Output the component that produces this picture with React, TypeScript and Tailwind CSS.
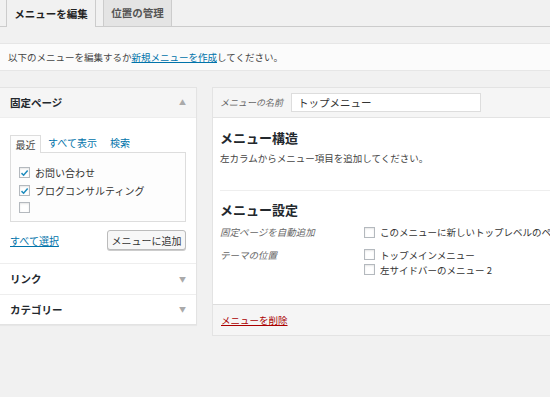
import React from "react"

const font = { fontFamily: '"Noto Sans CJK JP", "Noto Sans", sans-serif' }

function Check({ checked = false }: { checked?: boolean }) {
  return (
    <span className="inline-flex h-[11px] w-[11px] shrink-0 items-center justify-center border border-[#b4b9be] bg-white shadow-[inset_0_1px_2px_rgba(0,0,0,0.1)]">
      {checked && (
        <svg viewBox="0 0 12 12" className="h-[10px] w-[10px]">
          <path d="M2 6.2 L4.8 9 L10.2 2.6" fill="none" stroke="#1e8cbe" strokeWidth="2" />
        </svg>
      )}
    </span>
  )
}

function Arrow({ up = false }: { up?: boolean }) {
  return (
    <span className="text-[7px] leading-none text-[#aaa]">{up ? "▲" : "▼"}</span>
  )
}

export default function App() {
  return (
    <div className="h-[397px] w-[550px] overflow-hidden bg-[#f1f1f1] text-[#444]" style={font}>
      {/* tabs */}
      <div className="flex h-[27px] items-end gap-[7px] border-b border-[#ccc] pl-[6px]">
        <div className="-mb-px flex h-[27px] w-[90px] items-center justify-center border-x border-[#ccc] bg-[#f1f1f1] text-[10.5px] font-bold text-[#222]">
          メニューを編集
        </div>
        <div className="flex h-[26px] w-[69px] items-center justify-center border-x border-[#ccc] bg-[#e4e4e4] text-[10.5px] font-bold text-[#555]">
          位置の管理
        </div>
      </div>

      {/* notice */}
      <div className="mt-[16px] flex h-[28px] items-center border-y border-[#e6e6e6] bg-[#fbfbfb] pl-[8px] text-[9.5px] text-[#444]">
        以下のメニューを編集するか
        <a className="text-[#0073aa] underline">新規メニューを作成</a>
        してください。
      </div>

      <div className="mt-[16px] flex items-start gap-[15px]">
        {/* left column */}
        <div className="w-[197px] shrink-0 border border-l-0 border-[#e3e3e3] bg-white shadow-[0_1px_1px_rgba(0,0,0,0.04)]">
          <div className="flex h-[30px] items-center justify-between border-b border-[#eee] bg-[#f5f5f5] px-[10px]">
            <span className="text-[10.5px] font-bold text-[#23282d]">固定ページ</span>
            <Arrow up />
          </div>
          <div className="px-[10px] pb-[13px] pt-[17px]">
            <div className="flex items-end text-[10px]">
              <div className="-mb-px flex h-[18px] w-[31px] items-center justify-center border border-b-0 border-[#ddd] bg-[#fdfdfd] text-[#444]">
                最近
              </div>
              <span className="ml-[7px] pb-[2px] text-[#0073aa]">すべて表示</span>
              <span className="ml-[13px] pb-[2px] text-[#0073aa]">検索</span>
            </div>
            <div className="flex h-[70px] flex-col gap-[3px] border border-[#ddd] bg-[#fdfdfd] pl-[8px] pt-[12px] text-[10px] text-[#333]">
              <label className="flex items-center gap-[5px]">
                <Check checked />
                お問い合わせ
              </label>
              <label className="flex items-center gap-[5px]">
                <Check checked />
                ブログコンサルティング
              </label>
              <label className="flex items-center gap-[5px] pt-[1px]">
                <Check />
              </label>
            </div>
            <div className="mt-[8px] flex items-center justify-between">
              <a className="text-[10px] text-[#0073aa] underline">すべて選択</a>
              <button className="h-[20px] w-[79px] rounded-[3px] border border-[#bbb] bg-[#f7f7f7] text-[10px] text-[#333] shadow-[0_1px_0_#ccc]">
                メニューに追加
              </button>
            </div>
          </div>
          <div className="flex h-[31px] items-center justify-between border-t border-[#eee] px-[10px]">
            <span className="text-[10.5px] font-bold text-[#23282d]">リンク</span>
            <Arrow />
          </div>
          <div className="flex h-[30px] items-center justify-between border-t border-[#eee] px-[10px]">
            <span className="text-[10.5px] font-bold text-[#23282d]">カテゴリー</span>
            <Arrow />
          </div>
        </div>

        {/* right column */}
        <div className="w-[360px] shrink-0 border border-r-0 border-[#e3e3e3] bg-white">
          <div className="flex h-[30px] items-center gap-[8px] border-b border-[#e3e3e3] bg-[#f5f5f5] pl-[7px]">
            <span className="text-[9px] italic text-[#666]">メニューの名前</span>
            <div className="flex h-[19px] w-[190px] items-center border border-[#ddd] bg-white pl-[6px] text-[10.5px] text-[#333]">
              トップメニュー
            </div>
          </div>
          <div className="pl-[7px]">
            <div className="pt-[10px] text-[13px] font-bold text-[#23282d]">メニュー構造</div>
            <div className="mt-[3px] text-[9.5px] text-[#444]">左カラムからメニュー項目を追加してください。</div>
            <div className="mt-[25px] border-t border-[#eee]" />
            <div className="pt-[9px] text-[13px] font-bold text-[#23282d]">メニュー設定</div>
            <div className="mt-[6px] flex text-[9.5px]">
              <span className="w-[144px] shrink-0 italic text-[#666]">固定ページを自動追加</span>
              <label className="flex items-center gap-[5px] whitespace-nowrap text-[#333]">
                <Check />
                このメニューに新しいトップレベルのページを自動追加
              </label>
            </div>
            <div className="mt-[8px] flex pb-[27px] text-[9.5px]">
              <span className="w-[144px] shrink-0 italic text-[#666]">テーマの位置</span>
              <div className="flex flex-col gap-[1px] text-[#333]">
                <label className="flex items-center gap-[5px]">
                  <Check />
                  トップメインメニュー
                </label>
                <label className="flex items-center gap-[5px]">
                  <Check />
                  左サイドバーのメニュー 2
                </label>
              </div>
            </div>
          </div>
          <div className="flex h-[31px] items-center border-t border-[#ddd] bg-[#f5f5f5] pl-[8px]">
            <a className="text-[9.5px] text-[#a00] underline">メニューを削除</a>
          </div>
        </div>
      </div>
    </div>
  )
}
